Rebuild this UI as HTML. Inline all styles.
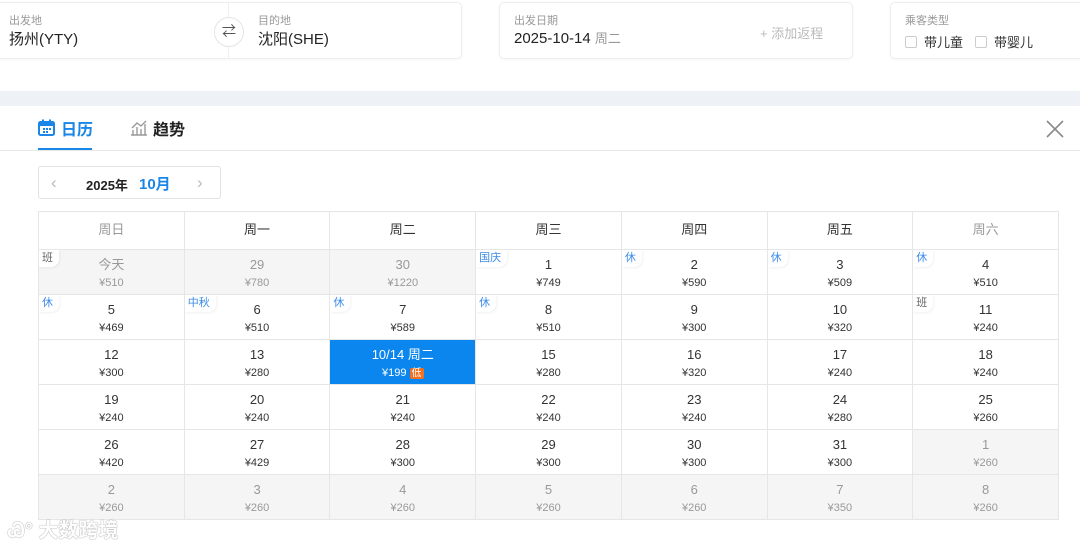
<!DOCTYPE html>
<html><head><meta charset="utf-8"><style>
*{margin:0;padding:0;box-sizing:border-box}
body{width:1080px;height:548px;overflow:hidden;background:#fff;font-family:"Liberation Sans","Noto Sans CJK SC",sans-serif;position:relative;color:#333}
.card{position:absolute;top:2px;height:57px;background:#fff;border:1px solid #eceef2;border-radius:5px;box-shadow:0 1px 3px rgba(0,0,0,.04)}
.lbl{position:absolute;font-size:11px;color:#999}
.val{position:absolute;font-size:15px;color:#222}
.band{position:absolute;left:0;top:91px;width:1080px;height:15px;background:#eef1f5}
.tabs{position:absolute;left:0;top:106px;width:1080px;height:45px;border-bottom:1px solid #e8e8e8}
.grid{position:absolute;left:38px;top:211px;width:1021px;display:grid;grid-template-columns:repeat(7,1fr);grid-template-rows:38px repeat(6,45px);border-left:1px solid #e6e6e6;border-top:1px solid #e6e6e6}
.grid>div{border-right:1px solid #e6e6e6;border-bottom:1px solid #e6e6e6;position:relative;text-align:center;font-size:13px;color:#333}
.h{line-height:36px;font-size:13px}
.c{padding-top:7px}
.c b{display:block;font-weight:normal;font-size:13px;line-height:16px}
.c i{display:block;font-style:normal;font-size:11px;line-height:16px;margin-top:2px}
.g{background:#f5f5f5;color:#999!important}
.g b,.g i{color:#999}
.t{position:absolute;left:0;top:0;font-size:11px;color:#3b8bea;background:#fff;padding:1px 6px 2px 3px;border-radius:0 0 8px 0;line-height:14px;box-shadow:1px 1px 2px rgba(0,0,0,.06)}
.t.k{color:#666}
.sel{background:#0a86ee;color:#fff!important}
.sel b,.sel i{color:#fff}
</style></head><body>
<div class="card" style="left:-10px;width:472px">
  <div class="lbl" style="left:18px;top:9px">出发地</div>
  <div class="val" style="left:18px;top:25px">扬州(YTY)</div>
  <div style="position:absolute;left:237px;top:0;width:1px;height:55px;background:#eee"></div>
  <div style="position:absolute;left:223px;top:14px;width:30px;height:30px;border:1px solid #e4e4e4;border-radius:50%;background:#fff;text-align:center;line-height:27px;font-size:14px;color:#555">⇄</div>
  <div class="lbl" style="left:267px;top:9px">目的地</div>
  <div class="val" style="left:267px;top:25px">沈阳(SHE)</div>
</div>
<div class="card" style="left:499px;width:354px">
  <div class="lbl" style="left:14px;top:9px">出发日期</div>
  <div class="val" style="left:14px;top:25px">2025-10-14 <span style="font-size:13px;color:#999">周二</span></div>
  <div style="position:absolute;left:260px;top:20px;font-size:13px;color:#bbb">+ 添加返程</div>
</div>
<div class="card" style="left:890px;width:200px">
  <div class="lbl" style="left:14px;top:9px">乘客类型</div>
  <div style="position:absolute;left:14px;top:29px;font-size:13px;color:#333"><span style="display:inline-block;width:12px;height:12px;border:1px solid #ccc;border-radius:2px;vertical-align:-1px;margin-right:7px"></span>带儿童<span style="display:inline-block;width:12px;height:12px;border:1px solid #ccc;border-radius:2px;vertical-align:-1px;margin:0 7px 0 12px"></span>带婴儿</div>
</div>
<div class="band"></div>
<div class="tabs">
  <svg style="position:absolute;left:38px;top:13px" width="17" height="17" viewBox="0 0 17 17"><rect x="1" y="3" width="15" height="13" rx="1.5" fill="none" stroke="#1a86e8" stroke-width="2"/><rect x="1" y="3" width="15" height="4" fill="#1a86e8"/><rect x="4" y="0.5" width="2" height="4" fill="#1a86e8"/><rect x="11" y="0.5" width="2" height="4" fill="#1a86e8"/><g fill="#1a86e8"><rect x="5" y="9" width="2" height="2"/><rect x="8" y="9" width="2" height="2"/><rect x="11" y="9" width="2" height="2"/><rect x="5" y="12" width="2" height="2"/><rect x="8" y="12" width="2" height="2"/></g></svg>
  <div style="position:absolute;left:61px;top:10px;font-size:16px;font-weight:bold;color:#1a86e8">日历</div>
  <div style="position:absolute;left:38px;top:42px;width:54px;height:2px;background:#1a86e8"></div>
  <svg style="position:absolute;left:130px;top:13px" width="18" height="17" viewBox="0 0 18 17"><g fill="none" stroke="#999" stroke-width="1.4"><path d="M1 16h16M3 16V11M7 16V8M11 16V10M15 16V5M2 9l5-5 4 3 5-5"/></g></svg>
  <div style="position:absolute;left:153px;top:10px;font-size:16px;font-weight:bold;color:#222">趋势</div>
  <svg style="position:absolute;left:1046px;top:14px" width="18" height="18" viewBox="0 0 18 18"><path d="M1 1L17 17M17 1L1 17" stroke="#888" stroke-width="1.6"/></svg>
</div>
<div style="position:absolute;left:38px;top:166px;width:183px;height:33px;border:1px solid #e2e2e2;border-radius:3px">
  <span style="position:absolute;left:12px;top:6px;font-size:17px;color:#bbb">‹</span>
  <span style="position:absolute;left:47px;top:8px;font-size:13px;font-weight:bold;color:#222">2025年</span>
  <span style="position:absolute;left:100px;top:6px;font-size:15px;font-weight:bold;color:#1a86e8">10月</span>
  <span style="position:absolute;left:158px;top:6px;font-size:17px;color:#bbb">›</span>
</div>
<div class="grid">
<div class="h" style="color:#999">周日</div><div class="h">周一</div><div class="h">周二</div><div class="h">周三</div><div class="h">周四</div><div class="h">周五</div><div class="h" style="color:#999">周六</div>
<div class="c g"><span class="t k">班</span><b>今天</b><i>¥510</i></div>
<div class="c g"><b>29</b><i>¥780</i></div>
<div class="c g"><b>30</b><i>¥1220</i></div>
<div class="c"><span class="t">国庆</span><b>1</b><i>¥749</i></div>
<div class="c"><span class="t">休</span><b>2</b><i>¥590</i></div>
<div class="c"><span class="t">休</span><b>3</b><i>¥509</i></div>
<div class="c"><span class="t">休</span><b>4</b><i>¥510</i></div>
<div class="c"><span class="t">休</span><b>5</b><i>¥469</i></div>
<div class="c"><span class="t">中秋</span><b>6</b><i>¥510</i></div>
<div class="c"><span class="t">休</span><b>7</b><i>¥589</i></div>
<div class="c"><span class="t">休</span><b>8</b><i>¥510</i></div>
<div class="c"><b>9</b><i>¥300</i></div>
<div class="c"><b>10</b><i>¥320</i></div>
<div class="c"><span class="t k">班</span><b>11</b><i>¥240</i></div>
<div class="c"><b>12</b><i>¥300</i></div>
<div class="c"><b>13</b><i>¥280</i></div>
<div class="c sel"><b>10/14 周二</b><i>¥199 <span style="background:#f36f22;color:#fff;padding:0 2px;border-radius:2px;font-size:10px">低</span></i></div>
<div class="c"><b>15</b><i>¥280</i></div>
<div class="c"><b>16</b><i>¥320</i></div>
<div class="c"><b>17</b><i>¥240</i></div>
<div class="c"><b>18</b><i>¥240</i></div>
<div class="c"><b>19</b><i>¥240</i></div>
<div class="c"><b>20</b><i>¥240</i></div>
<div class="c"><b>21</b><i>¥240</i></div>
<div class="c"><b>22</b><i>¥240</i></div>
<div class="c"><b>23</b><i>¥240</i></div>
<div class="c"><b>24</b><i>¥280</i></div>
<div class="c"><b>25</b><i>¥260</i></div>
<div class="c"><b>26</b><i>¥420</i></div>
<div class="c"><b>27</b><i>¥429</i></div>
<div class="c"><b>28</b><i>¥300</i></div>
<div class="c"><b>29</b><i>¥300</i></div>
<div class="c"><b>30</b><i>¥300</i></div>
<div class="c"><b>31</b><i>¥300</i></div>
<div class="c g"><b>1</b><i>¥260</i></div>
<div class="c g"><b>2</b><i>¥260</i></div>
<div class="c g"><b>3</b><i>¥260</i></div>
<div class="c g"><b>4</b><i>¥260</i></div>
<div class="c g"><b>5</b><i>¥260</i></div>
<div class="c g"><b>6</b><i>¥260</i></div>
<div class="c g"><b>7</b><i>¥350</i></div>
<div class="c g"><b>8</b><i>¥260</i></div>
</div>
<div style="position:absolute;left:8px;top:514px;font-size:20px;font-weight:bold;color:#fff;text-shadow:0 0 1px #999,0 0 1px #999">Ꮚ° 大数跨境</div>
</body></html>
